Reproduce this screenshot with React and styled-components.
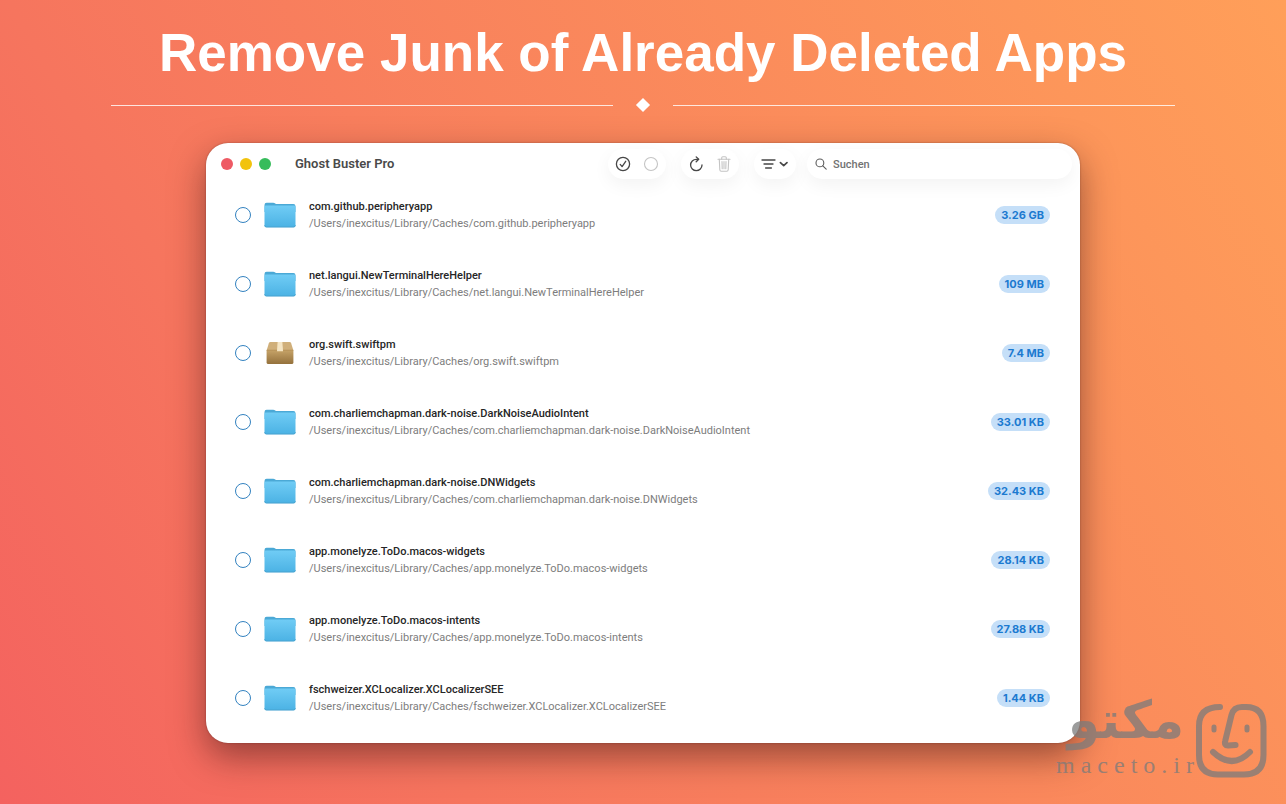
import React, { useState } from 'react';
import styled, { createGlobalStyle } from 'styled-components';

const items = [
  { name: 'com.github.peripheryapp', size: '3.26 GB', icon: 'folder' },
  { name: 'net.langui.NewTerminalHereHelper', size: '109 MB', icon: 'folder' },
  { name: 'org.swift.swiftpm', size: '7.4 MB', icon: 'package' },
  { name: 'com.charliemchapman.dark-noise.DarkNoiseAudioIntent', size: '33.01 KB', icon: 'folder' },
  { name: 'com.charliemchapman.dark-noise.DNWidgets', size: '32.43 KB', icon: 'folder' },
  { name: 'app.monelyze.ToDo.macos-widgets', size: '28.14 KB', icon: 'folder' },
  { name: 'app.monelyze.ToDo.macos-intents', size: '27.88 KB', icon: 'folder' },
  { name: 'fschweizer.XCLocalizer.XCLocalizerSEE', size: '1.44 KB', icon: 'folder' },
];

const FolderIcon = () => (
  <svg width="32" height="26" viewBox="0 0 32 26" aria-hidden="true">
    <defs>
      <linearGradient id="folderFront" x1="0" y1="0" x2="0" y2="1">
        <stop offset="0" stopColor="#70ccf5" />
        <stop offset="1" stopColor="#4bb2e4" />
      </linearGradient>
    </defs>
    <path d="M0.5 3 Q0.5 0.7 2.6 0.7 H9.2 Q10.4 0.7 11.2 1.5 L12 2.1 H29.4 Q31.5 2.1 31.5 4.2 V10 H0.5 Z" fill="#4ba9d6" />
    <path d="M0.5 5 Q0.5 3.6 2 3.6 H30 Q31.5 3.6 31.5 5 V23.4 Q31.5 25.3 29.6 25.3 H2.4 Q0.5 25.3 0.5 23.4 Z" fill="url(#folderFront)" />
    <path d="M0.6 23.2 Q0.8 25 2.4 25 H29.6 Q31.2 25 31.4 23.2" fill="none" stroke="#489fca" strokeWidth="0.8" />
  </svg>
);

const PackageIcon = () => (
  <svg width="32" height="26" viewBox="0 0 32 26" aria-hidden="true">
    <defs>
      <linearGradient id="boxFront" x1="0" y1="0" x2="0" y2="1">
        <stop offset="0" stopColor="#c6a368" />
        <stop offset="1" stopColor="#94713c" />
      </linearGradient>
    </defs>
    <path d="M6.4 2 H25.6 Q26.6 2 27.1 3 L29.4 10.5 H2.6 L4.9 3 Q5.4 2 6.4 2 Z" fill="#d0af7a" />
    <path d="M2.6 10 H29.4 V22.4 Q29.4 24 27.8 24 H4.2 Q2.6 24 2.6 22.4 Z" fill="url(#boxFront)" />
    <path d="M13.6 2 H18.4 L19 11.2 H13 Z" fill="#f5e5c4" />
    <path d="M2.8 10.2 H13 M19 10.2 H29.2" stroke="#b18d54" strokeWidth="0.7" />
  </svg>
);

const CheckCircleIcon = () => (
  <svg width="16" height="16" viewBox="0 0 16 16" fill="none" stroke="currentColor" strokeWidth="1.3" strokeLinecap="round" strokeLinejoin="round" aria-hidden="true">
    <circle cx="8" cy="8" r="6.6" />
    <path d="M5.2 8.4 L7.1 10.6 L10.7 5.3" />
  </svg>
);

const EmptyCircleIcon = () => (
  <svg width="16" height="16" viewBox="0 0 16 16" fill="none" stroke="currentColor" strokeWidth="1.1" aria-hidden="true">
    <circle cx="8" cy="8" r="6.5" />
  </svg>
);

const RefreshIcon = () => (
  <svg width="16" height="16" viewBox="0 0 16 16" fill="none" stroke="currentColor" strokeWidth="1.3" strokeLinecap="round" strokeLinejoin="round" aria-hidden="true">
    <path d="M14 9 A5.7 5.7 0 1 1 8.3 3.3 H10.4" />
    <path d="M8.2 0.9 L10.7 3.3 L8.2 5.8" />
  </svg>
);

const TrashIcon = () => (
  <svg width="16" height="16" viewBox="0 0 16 16" fill="none" stroke="currentColor" strokeWidth="1.1" strokeLinecap="round" strokeLinejoin="round" aria-hidden="true">
    <path d="M2 3.3 H14" />
    <path d="M5.7 3.2 V1.8 Q5.7 0.7 6.8 0.7 H9.2 Q10.3 0.7 10.3 1.8 V3.2" />
    <path d="M3.3 3.4 L3.8 13.8 Q3.9 15.2 5.2 15.2 H10.8 Q12.1 15.2 12.2 13.8 L12.7 3.4" />
    <path d="M6 5.6 L6.2 12.8 M8 5.6 V12.8 M10 5.6 L9.8 12.8" />
  </svg>
);

const SortIcon = () => (
  <svg width="28" height="12" viewBox="0 0 28 12" fill="none" stroke="currentColor" strokeWidth="1.3" strokeLinecap="round" strokeLinejoin="round" aria-hidden="true">
    <path d="M1 2 H14 M3 6 H12 M4.6 10 H10.4" />
    <path d="M19.4 4.6 L22.7 7.6 L26 4.6" strokeWidth="1.7" />
  </svg>
);

const SearchIcon = () => (
  <svg width="12" height="12" viewBox="0 0 12 12" fill="none" stroke="currentColor" strokeWidth="1.1" strokeLinecap="round" aria-hidden="true">
    <circle cx="4.9" cy="4.9" r="3.9" />
    <path d="M7.8 7.8 L11.2 11.2" />
  </svg>
);

const FaceLogo = () => (
  <svg width="72" height="74" viewBox="0 0 72 74" fill="none" stroke="currentColor" strokeWidth="6" strokeLinecap="round" strokeLinejoin="round" aria-hidden="true">
    <path d="M24 3 Q3 3 3 22 V51 Q3 70.5 22 70.5 H48 Q67.5 70.5 67.5 51 V22 Q67.5 3 50 3 H46 Q37.5 3 35.5 11 L29.2 37 Q28 41.5 32 41.5 L39.5 41" />
    <path d="M17 48 Q36 66 54 48" />
    <path d="M18 23 V26 M51 23 V26" strokeWidth="5" />
  </svg>
);

const App = () => {
  const [selected, setSelected] = useState([]);
  const [search, setSearch] = useState('');

  const toggle = (name) => {
    setSelected((current) =>
      current.includes(name) ? current.filter((n) => n !== name) : [...current, name]
    );
  };

  const visible = items.filter((item) => item.name.toLowerCase().includes(search.toLowerCase()));

  return (
    <Page>
      <GlobalStyle />
      <Title>Remove Junk of Already Deleted Apps</Title>
      <Divider>
        <Line />
        <Diamond />
        <Line />
      </Divider>

      <Window>
        <TitleBar>
          <Lights>
            <Light $color="#ee5a64" />
            <Light $color="#f2c30d" />
            <Light $color="#36bc5b" />
          </Lights>
          <AppName>Ghost Buster Pro</AppName>
          <Tools>
            <ToolGroup>
              <ToolButton aria-label="Alle auswählen" onClick={() => setSelected(items.map((i) => i.name))}>
                <CheckCircleIcon />
              </ToolButton>
              <ToolButton $muted aria-label="Auswahl aufheben" onClick={() => setSelected([])}>
                <EmptyCircleIcon />
              </ToolButton>
            </ToolGroup>
            <ToolGroup>
              <ToolButton aria-label="Aktualisieren">
                <RefreshIcon />
              </ToolButton>
              <ToolButton $muted aria-label="Löschen">
                <TrashIcon />
              </ToolButton>
            </ToolGroup>
            <ToolGroup>
              <ToolButton aria-label="Sortieren">
                <SortIcon />
              </ToolButton>
            </ToolGroup>
          </Tools>
          <SearchField>
            <SearchIcon />
            <SearchInput
              type="text"
              aria-label="Suchen"
              placeholder="Suchen"
              value={search}
              onChange={(e) => setSearch(e.target.value)}
            />
          </SearchField>
        </TitleBar>

        <List>
          {visible.map((item) => (
            <Row key={item.name}>
              <RowLabel>
                <Check
                  type="checkbox"
                  checked={selected.includes(item.name)}
                  onChange={() => toggle(item.name)}
                />
                {item.icon === 'folder' ? <FolderIcon /> : <PackageIcon />}
                <RowText>
                  <Name>{item.name}</Name>
                  <Path>/Users/inexcitus/Library/Caches/{item.name}</Path>
                </RowText>
              </RowLabel>
              <Size>{item.size}</Size>
            </Row>
          ))}
        </List>
      </Window>

      <Watermark>
        <WatermarkText>
          <Persian lang="fa">مکتو</Persian>
          <Domain>maceto.ir</Domain>
        </WatermarkText>
        <FaceLogo />
      </Watermark>
    </Page>
  );
};

const GlobalStyle = createGlobalStyle`
  * {
    box-sizing: border-box;
  }
  body {
    margin: 0;
  }
`;

const Page = styled.main`
  position: relative;
  min-height: 100vh;
  padding: 24px 0 60px;
  overflow: hidden;
  display: flex;
  flex-direction: column;
  align-items: center;
  background: linear-gradient(60deg, #f4625f 0%, #f6755e 27%, #ff9f59 100%);
  font-family: Roboto, 'Liberation Sans', sans-serif;
`;

const Title = styled.h1`
  margin: 0;
  color: #fff;
  font-family: 'Liberation Sans', Arial, sans-serif;
  font-size: 53px;
  font-weight: bold;
  line-height: 58px;
  text-align: center;
`;

const Divider = styled.div`
  width: 100%;
  max-width: 1064px;
  margin: 18px 0 33px;
  display: flex;
  align-items: center;
  gap: 25px;
`;

const Line = styled.div`
  flex: 1;
  height: 1px;
  background: rgba(255, 255, 255, 0.8);
`;

const Diamond = styled.div`
  width: 10px;
  height: 10px;
  background: #fff;
  transform: rotate(45deg);
`;

const Window = styled.section`
  width: 90%;
  max-width: 874px;
  padding-bottom: 11px;
  border-radius: 22px;
  background: #fff;
  box-shadow: 0 14px 34px rgba(60, 20, 20, 0.5), 0 0 2px rgba(60, 20, 20, 0.4);
`;

const TitleBar = styled.header`
  padding: 6px 8px 1px 15px;
  display: flex;
  align-items: center;
`;

const Lights = styled.div`
  display: flex;
  gap: 7px;
`;

const Light = styled.span`
  width: 12px;
  height: 12px;
  border-radius: 50%;
  background: ${(props) => props.$color};
`;

const AppName = styled.h2`
  flex: 1;
  margin: 0 0 0 24px;
  color: #4a4a4a;
  font-size: 13px;
  font-weight: 600;
  line-height: 16px;
`;

const Tools = styled.div`
  margin-right: 11px;
  display: flex;
  gap: 15px;
`;

const ToolGroup = styled.div`
  height: 30px;
  padding: 0 7px;
  display: flex;
  align-items: center;
  gap: 12px;
  border-radius: 15px;
  background: #fff;
  box-shadow: 0 6px 18px rgba(0, 0, 0, 0.05);
`;

const ToolButton = styled.button`
  padding: 0;
  display: flex;
  border: none;
  background: none;
  color: ${(props) => (props.$muted ? '#c4c4c4' : '#474747')};
  cursor: pointer;
`;

const SearchField = styled.label`
  width: 265px;
  height: 30px;
  padding: 0 8px;
  display: flex;
  align-items: center;
  gap: 6px;
  border-radius: 15px;
  background: #fff;
  box-shadow: 0 6px 18px rgba(0, 0, 0, 0.05);
  color: #5c5c5c;
`;

const SearchInput = styled.input`
  flex: 1;
  min-width: 0;
  padding: 0;
  border: none;
  outline: none;
  background: none;
  color: #4a4a4a;
  font-family: inherit;
  font-size: 11px;
  font-weight: 500;
  &::placeholder {
    color: #727272;
    opacity: 1;
  }
`;

const List = styled.ul`
  margin: 0;
  padding: 0 30px 0 29px;
  list-style: none;
`;

const Row = styled.li`
  height: 69px;
  display: flex;
  align-items: center;
  justify-content: space-between;
`;

const RowLabel = styled.label`
  display: flex;
  align-items: center;
`;

const Check = styled.input`
  appearance: none;
  width: 16px;
  height: 16px;
  margin: 0 13px 0 0;
  border: 1px solid #3382c0;
  border-radius: 50%;
  background: #fff;
  &:checked {
    background: #3382c0;
  }
`;

const RowText = styled.span`
  margin-left: 13px;
  display: flex;
  flex-direction: column;
`;

const Name = styled.span`
  color: #262626;
  font-size: 11px;
  font-weight: 500;
  line-height: 17px;
`;

const Path = styled.span`
  color: #7d7d7d;
  font-size: 11px;
  line-height: 17px;
`;

const Size = styled.span`
  padding: 0 6px;
  border-radius: 9px;
  background: #c5dff8;
  color: #1c7ad0;
  font-family: Inter, 'Liberation Sans', sans-serif;
  font-size: 11px;
  font-weight: 700;
  line-height: 18px;
`;

const Watermark = styled.div`
  position: absolute;
  right: 18px;
  bottom: 26px;
  display: flex;
  align-items: flex-end;
  color: #7b7b7b;
  opacity: 0.75;
`;

const WatermarkText = styled.div`
  width: 140px;
  display: flex;
  flex-direction: column;
  gap: 8px;
`;

const Persian = styled.span`
  font-family: 'DejaVu Sans', sans-serif;
  font-size: 52px;
  font-weight: bold;
  line-height: 48px;
  text-align: center;
`;

const Domain = styled.span`
  font-family: 'Liberation Serif', serif;
  font-size: 24px;
  letter-spacing: 6px;
  line-height: 26px;
`;

export default App;
